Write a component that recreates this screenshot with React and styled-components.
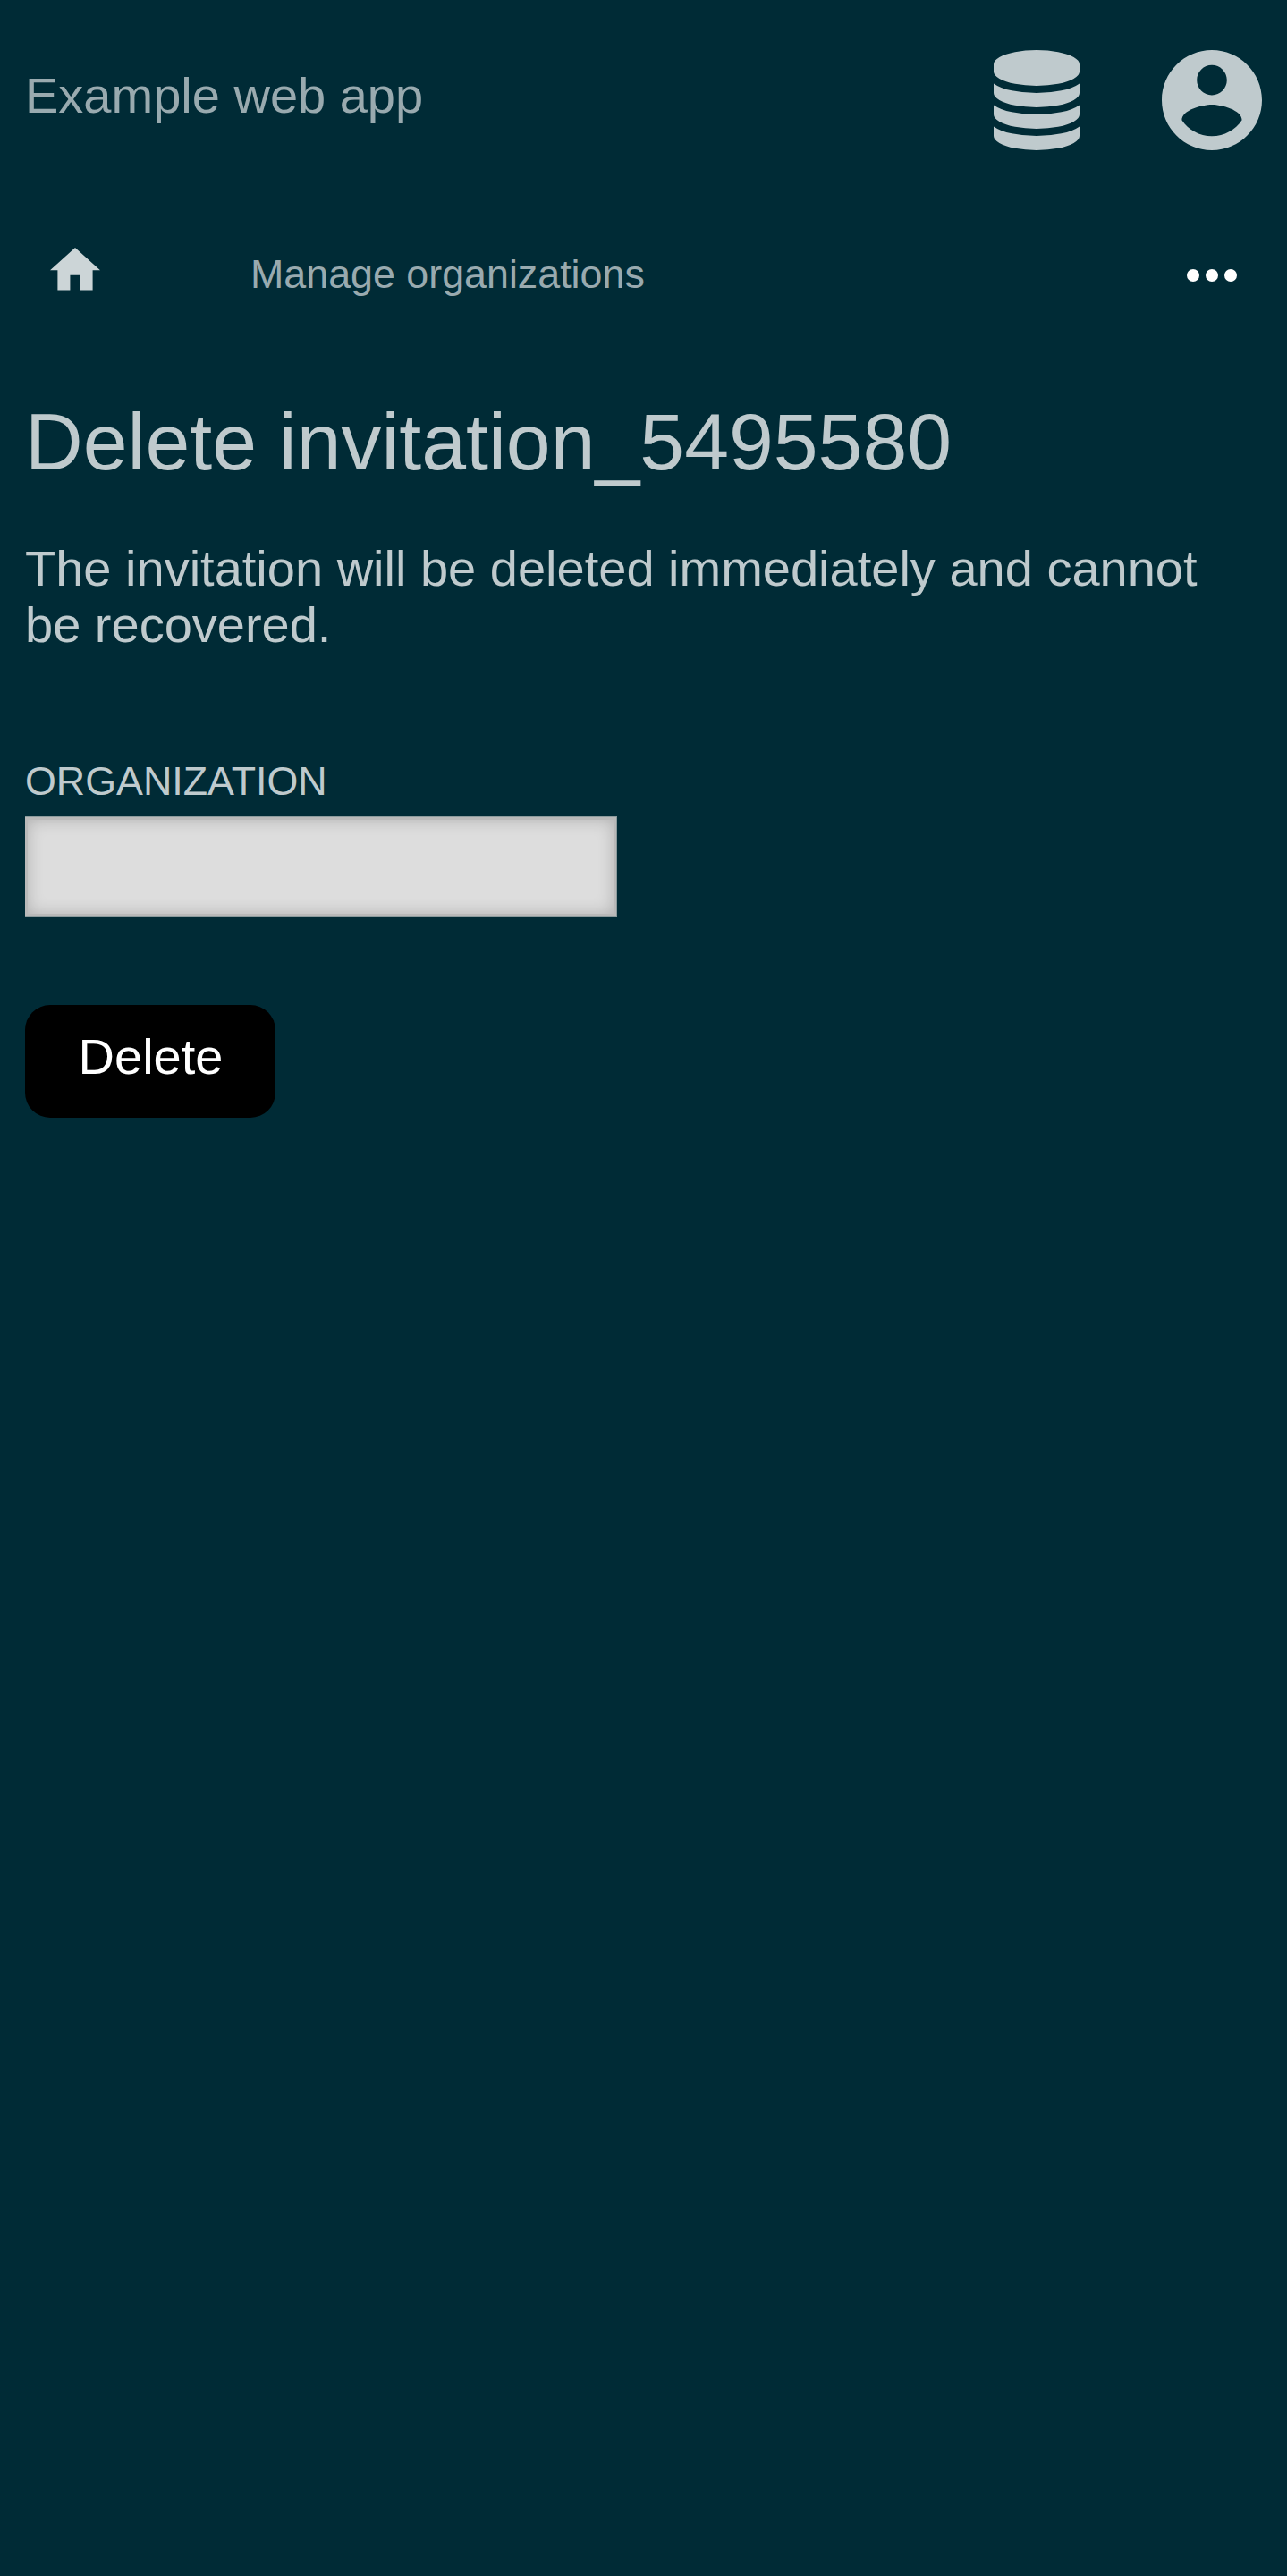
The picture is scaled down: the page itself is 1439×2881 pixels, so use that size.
import React from "react";
import styled, { createGlobalStyle } from "styled-components";

const GlobalStyle = createGlobalStyle`
  *, *::before, *::after { box-sizing: border-box; }
  html { background: #002b36; font-size: 56px; }
  body {
    margin: 0;
    background: #002b36;
    color: #bfcacd;
    font-family: "Liberation Sans", Arial, sans-serif;
    line-height: 63px;
  }
`;

const Page = styled.div`
  min-height: 2881px;
  padding: 0 28px;
`;

const Header = styled.header`
  display: flex;
  align-items: flex-start;
  justify-content: space-between;
  height: 224px;
  padding: 56px 0.5px 0 0;
`;

const Brand = styled.a`
  margin-top: 19px;
  color: #99aaaf;
`;

const HeaderIcons = styled.div`
  display: flex;
  gap: 92px;
`;

const Icon = styled.svg`
  display: block;
  width: ${(p) => p.$w}px;
  height: ${(p) => p.$h}px;
  fill: ${(p) => p.$color || "#bfcacd"};
`;

const Nav = styled.nav`
  display: flex;
  align-items: flex-start;
  height: 168px;
  padding: 53.2px 28.5px 0 28px;
`;

const NavLink = styled.a`
  margin: 3.8px auto 0 168px;
  color: #99aaaf;
  font-size: 0.8rem;
  line-height: 50px;
`;

const MoreButton = styled.div`
  margin-top: 23.8px;
`;

const Title = styled.h1`
  margin: 0;
  padding-top: 52px;
  font-size: 1.6rem;
  font-weight: 400;
  line-height: 101px;
`;

const Notice = styled.p`
  margin: 59px 0 0;
`;

const Field = styled.label`
  display: flex;
  flex-direction: column;
  margin-top: 118px;
  font-size: 0.8rem;
  line-height: 50px;
  text-transform: uppercase;
`;

const TextInput = styled.input`
  width: 662px;
  height: 113px;
  margin: 15px 0 0;
  padding: 0 28px;
  border: 1px solid #8c9b9d;
  border-left-width: 0;
  border-radius: 0;
  outline: 0;
  background: #ddd;
  box-shadow:
    inset 0 0 0 3px #b9b9b9,
    inset 0 0 18px 3px rgba(0, 0, 0, 0.2);
  font: inherit;
`;

const DeleteButton = styled.button`
  display: block;
  width: 280px;
  height: 126px;
  margin: 97.5px 0 0;
  padding: 0 0 10px 1px;
  border: 0;
  border-radius: 28px;
  background: #000;
  color: #fff;
  font: inherit;
`;

export default function App() {
  return (
    <Page>
      <GlobalStyle />
      <Header>
        <Brand>Example web app</Brand>
        <HeaderIcons>
          <Icon $w={96} $h={112} viewBox="0 0 1536 1792">
            <path d="M768 768q237 0 443-43t325-127v170q0 69-103 128t-280 93.5-385 34.5-385-34.5-280-93.5-103-128v-170q119 84 325 127t443 43zm0 768q237 0 443-43t325-127v170q0 69-103 128t-280 93.5-385 34.5-385-34.5-280-93.5-103-128v-170q119 84 325 127t443 43zm0-384q237 0 443-43t325-127v170q0 69-103 128t-280 93.5-385 34.5-385-34.5-280-93.5-103-128v-170q119 84 325 127t443 43zm0-1152q208 0 385 34.5t280 93.5 103 128v128q0 69-103 128t-280 93.5-385 34.5-385-34.5-280-93.5-103-128v-128q0-69 103-128t280-93.5 385-34.5z" />
          </Icon>
          <Icon $w={112} $h={112} viewBox="2 2 20 20">
            <path d="M12 2C6.48 2 2 6.48 2 12s4.48 10 10 10 10-4.48 10-10S17.52 2 12 2zm0 3c1.66 0 3 1.34 3 3s-1.34 3-3 3-3-1.34-3-3 1.34-3 3-3zm0 14.2c-2.5 0-4.71-1.28-6-3.22.03-1.99 4-3.08 6-3.08 1.99 0 5.97 1.09 6 3.08-1.29 1.94-3.5 3.22-6 3.22z" />
          </Icon>
        </HeaderIcons>
      </Header>
      <Nav>
        <Icon $w={56} $h={47.6} $color="#ccd5d7" viewBox="2 3 20 17">
          <path d="M10 20v-6h4v6h5v-8h3L12 3 2 12h3v8z" />
        </Icon>
        <NavLink>Manage organizations</NavLink>
        <MoreButton>
          <Icon $w={56} $h={14} $color="#fff" viewBox="4 10 16 4">
            <circle cx="6" cy="12" r="2" />
            <circle cx="12" cy="12" r="2" />
            <circle cx="18" cy="12" r="2" />
          </Icon>
        </MoreButton>
      </Nav>
      <Title>Delete invitation_5495580</Title>
      <Notice>
        The invitation will be deleted immediately and cannot be recovered.
      </Notice>
      <Field>
        Organization
        <TextInput type="text" />
      </Field>
      <DeleteButton type="button">Delete</DeleteButton>
    </Page>
  );
}
